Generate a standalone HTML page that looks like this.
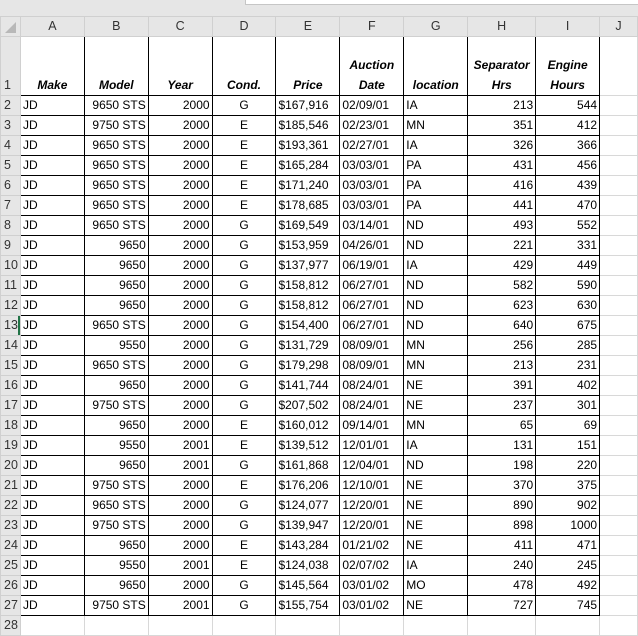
<!DOCTYPE html>
<html><head><meta charset="utf-8"><style>
html,body{margin:0;padding:0;background:#fff;width:638px;height:631px;overflow:hidden;font-family:"Liberation Sans",Arial,sans-serif;}
.top{position:absolute;left:0;top:0;width:638px;height:16px;background:#e6e6e6;}
.box{position:absolute;left:245px;top:0;width:393px;height:5px;background:#fff;border-left:1px solid #c6c6c6;border-bottom:1px solid #c6c6c6;box-sizing:border-box;}
table{position:absolute;left:0;top:16px;border-collapse:collapse;table-layout:fixed;font-size:12px;color:#000;}
td{padding:0 2px;height:19px;white-space:nowrap;overflow:hidden;border:1px solid #d8d8d8;line-height:19px;}
tr.ch td{background:#e6e6e6;text-align:center;color:#333;height:18px;border-color:#d0d0d0;font-size:12.5px}
tr.ch td.corner{background:#e6e6e6}
td.rh{background:#e6e6e6;color:#333;text-align:left;padding-left:3px;border-color:#d0d0d0;font-size:12.5px}
td.b{border:1px solid #000;}
td.r{text-align:right}
td.c{text-align:center}
tr.h1 td{height:58px;vertical-align:bottom;line-height:20px}
tr.h1 td.b{font-weight:bold;font-style:italic;text-align:center}
td.sel{box-shadow:inset -2px 0 0 #217346;}
</style></head><body>
<div class="top"></div><div class="box"></div>
<table>
<colgroup><col style="width:20px"><col style="width:64px"><col style="width:64px"><col style="width:64px"><col style="width:64px"><col style="width:64px"><col style="width:64px"><col style="width:64px"><col style="width:68px"><col style="width:64px"><col style="width:38px"></colgroup>
<tr class="ch"><td class="corner"><svg width="14" height="14" style="vertical-align:middle"><polygon points="13,2 13,13 2,13" fill="#b8b8b8"/></svg></td><td>A</td><td>B</td><td>C</td><td>D</td><td>E</td><td>F</td><td>G</td><td>H</td><td>I</td><td>J</td></tr>
<tr class="h1"><td class="rh">1</td><td class="b">Make</td><td class="b">Model</td><td class="b">Year</td><td class="b">Cond.</td><td class="b">Price</td><td class="b">Auction<br>Date</td><td class="b">location</td><td class="b">Separator<br>Hrs</td><td class="b">Engine<br>Hours</td><td></td></tr>
<tr><td class="rh">2</td><td class="b">JD</td><td class="b r">9650 STS</td><td class="b r">2000</td><td class="b c">G</td><td class="b">$167,916</td><td class="b">02/09/01</td><td class="b">IA</td><td class="b r">213</td><td class="b r">544</td><td></td></tr>
<tr><td class="rh">3</td><td class="b">JD</td><td class="b r">9750 STS</td><td class="b r">2000</td><td class="b c">E</td><td class="b">$185,546</td><td class="b">02/23/01</td><td class="b">MN</td><td class="b r">351</td><td class="b r">412</td><td></td></tr>
<tr><td class="rh">4</td><td class="b">JD</td><td class="b r">9650 STS</td><td class="b r">2000</td><td class="b c">E</td><td class="b">$193,361</td><td class="b">02/27/01</td><td class="b">IA</td><td class="b r">326</td><td class="b r">366</td><td></td></tr>
<tr><td class="rh">5</td><td class="b">JD</td><td class="b r">9650 STS</td><td class="b r">2000</td><td class="b c">E</td><td class="b">$165,284</td><td class="b">03/03/01</td><td class="b">PA</td><td class="b r">431</td><td class="b r">456</td><td></td></tr>
<tr><td class="rh">6</td><td class="b">JD</td><td class="b r">9650 STS</td><td class="b r">2000</td><td class="b c">E</td><td class="b">$171,240</td><td class="b">03/03/01</td><td class="b">PA</td><td class="b r">416</td><td class="b r">439</td><td></td></tr>
<tr><td class="rh">7</td><td class="b">JD</td><td class="b r">9650 STS</td><td class="b r">2000</td><td class="b c">E</td><td class="b">$178,685</td><td class="b">03/03/01</td><td class="b">PA</td><td class="b r">441</td><td class="b r">470</td><td></td></tr>
<tr><td class="rh">8</td><td class="b">JD</td><td class="b r">9650 STS</td><td class="b r">2000</td><td class="b c">G</td><td class="b">$169,549</td><td class="b">03/14/01</td><td class="b">ND</td><td class="b r">493</td><td class="b r">552</td><td></td></tr>
<tr><td class="rh">9</td><td class="b">JD</td><td class="b r">9650</td><td class="b r">2000</td><td class="b c">G</td><td class="b">$153,959</td><td class="b">04/26/01</td><td class="b">ND</td><td class="b r">221</td><td class="b r">331</td><td></td></tr>
<tr><td class="rh">10</td><td class="b">JD</td><td class="b r">9650</td><td class="b r">2000</td><td class="b c">G</td><td class="b">$137,977</td><td class="b">06/19/01</td><td class="b">IA</td><td class="b r">429</td><td class="b r">449</td><td></td></tr>
<tr><td class="rh">11</td><td class="b">JD</td><td class="b r">9650</td><td class="b r">2000</td><td class="b c">G</td><td class="b">$158,812</td><td class="b">06/27/01</td><td class="b">ND</td><td class="b r">582</td><td class="b r">590</td><td></td></tr>
<tr><td class="rh">12</td><td class="b">JD</td><td class="b r">9650</td><td class="b r">2000</td><td class="b c">G</td><td class="b">$158,812</td><td class="b">06/27/01</td><td class="b">ND</td><td class="b r">623</td><td class="b r">630</td><td></td></tr>
<tr><td class="rh sel">13</td><td class="b">JD</td><td class="b r">9650 STS</td><td class="b r">2000</td><td class="b c">G</td><td class="b">$154,400</td><td class="b">06/27/01</td><td class="b">ND</td><td class="b r">640</td><td class="b r">675</td><td></td></tr>
<tr><td class="rh">14</td><td class="b">JD</td><td class="b r">9550</td><td class="b r">2000</td><td class="b c">G</td><td class="b">$131,729</td><td class="b">08/09/01</td><td class="b">MN</td><td class="b r">256</td><td class="b r">285</td><td></td></tr>
<tr><td class="rh">15</td><td class="b">JD</td><td class="b r">9650 STS</td><td class="b r">2000</td><td class="b c">G</td><td class="b">$179,298</td><td class="b">08/09/01</td><td class="b">MN</td><td class="b r">213</td><td class="b r">231</td><td></td></tr>
<tr><td class="rh">16</td><td class="b">JD</td><td class="b r">9650</td><td class="b r">2000</td><td class="b c">G</td><td class="b">$141,744</td><td class="b">08/24/01</td><td class="b">NE</td><td class="b r">391</td><td class="b r">402</td><td></td></tr>
<tr><td class="rh">17</td><td class="b">JD</td><td class="b r">9750 STS</td><td class="b r">2000</td><td class="b c">G</td><td class="b">$207,502</td><td class="b">08/24/01</td><td class="b">NE</td><td class="b r">237</td><td class="b r">301</td><td></td></tr>
<tr><td class="rh">18</td><td class="b">JD</td><td class="b r">9650</td><td class="b r">2000</td><td class="b c">E</td><td class="b">$160,012</td><td class="b">09/14/01</td><td class="b">MN</td><td class="b r">65</td><td class="b r">69</td><td></td></tr>
<tr><td class="rh">19</td><td class="b">JD</td><td class="b r">9550</td><td class="b r">2001</td><td class="b c">E</td><td class="b">$139,512</td><td class="b">12/01/01</td><td class="b">IA</td><td class="b r">131</td><td class="b r">151</td><td></td></tr>
<tr><td class="rh">20</td><td class="b">JD</td><td class="b r">9650</td><td class="b r">2001</td><td class="b c">G</td><td class="b">$161,868</td><td class="b">12/04/01</td><td class="b">ND</td><td class="b r">198</td><td class="b r">220</td><td></td></tr>
<tr><td class="rh">21</td><td class="b">JD</td><td class="b r">9750 STS</td><td class="b r">2000</td><td class="b c">E</td><td class="b">$176,206</td><td class="b">12/10/01</td><td class="b">NE</td><td class="b r">370</td><td class="b r">375</td><td></td></tr>
<tr><td class="rh">22</td><td class="b">JD</td><td class="b r">9650 STS</td><td class="b r">2000</td><td class="b c">G</td><td class="b">$124,077</td><td class="b">12/20/01</td><td class="b">NE</td><td class="b r">890</td><td class="b r">902</td><td></td></tr>
<tr><td class="rh">23</td><td class="b">JD</td><td class="b r">9750 STS</td><td class="b r">2000</td><td class="b c">G</td><td class="b">$139,947</td><td class="b">12/20/01</td><td class="b">NE</td><td class="b r">898</td><td class="b r">1000</td><td></td></tr>
<tr><td class="rh">24</td><td class="b">JD</td><td class="b r">9650</td><td class="b r">2000</td><td class="b c">E</td><td class="b">$143,284</td><td class="b">01/21/02</td><td class="b">NE</td><td class="b r">411</td><td class="b r">471</td><td></td></tr>
<tr><td class="rh">25</td><td class="b">JD</td><td class="b r">9550</td><td class="b r">2001</td><td class="b c">E</td><td class="b">$124,038</td><td class="b">02/07/02</td><td class="b">IA</td><td class="b r">240</td><td class="b r">245</td><td></td></tr>
<tr><td class="rh">26</td><td class="b">JD</td><td class="b r">9650</td><td class="b r">2000</td><td class="b c">G</td><td class="b">$145,564</td><td class="b">03/01/02</td><td class="b">MO</td><td class="b r">478</td><td class="b r">492</td><td></td></tr>
<tr><td class="rh">27</td><td class="b">JD</td><td class="b r">9750 STS</td><td class="b r">2001</td><td class="b c">G</td><td class="b">$155,754</td><td class="b">03/01/02</td><td class="b">NE</td><td class="b r">727</td><td class="b r">745</td><td></td></tr>
<tr><td class="rh">28</td><td></td><td></td><td></td><td></td><td></td><td></td><td></td><td></td><td></td><td></td></tr>
</table>
</body></html>
